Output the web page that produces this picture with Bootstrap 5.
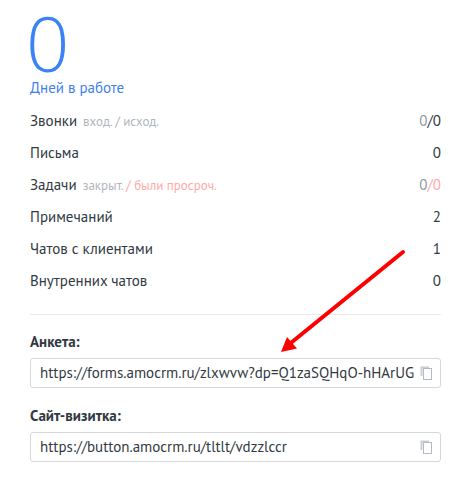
<!DOCTYPE html>
<html lang="ru">
<head>
<meta charset="utf-8">
<meta name="viewport" content="width=device-width, initial-scale=1">
<title>Статистика</title>
<link href="https://cdn.jsdelivr.net/npm/bootstrap@5.3.0/dist/css/bootstrap.min.css" rel="stylesheet">
<style>
body { font-family: "PT Sans", "Noto Sans", sans-serif; font-size: 15px; line-height: 20px; color: #313942; background: #fff; }
.panel { padding: 11px 29px 24px 30px; }
.days-value { font-family: "Open Sans", sans-serif; font-weight: 300; font-size: 76px; line-height: 64px; color: #3a82f5; margin-left: -4px; }
.days-label { color: #3f80ee; line-height: 26px; }
.stat-list { padding-top: 4px; }
.stat-row { height: 32px; }
.stat-note { font-size: 13px; color: #b0b5bd; margin-left: 2px; }
.muted-num { color: #8f99a6; }
.late { color: #ffa9a9; }
.divider { border-top: 1px solid #e8eaeb; margin: 17px 0 16px; }
.link-field { margin-bottom: 17px; }
.link-label { font-weight: 700; line-height: 22px; margin-bottom: 5px; }
.link-box { height: 30px; border: 1px solid #d7d8da; border-radius: 3px; padding: 0 7px 0 9px; }
.link-box input { font-size: 15px; line-height: 20px; color: #313942; min-width: 0; }
.copy-btn { line-height: 0; margin-left: 6px; }
.pointer { right: 35px; top: -67px; pointer-events: none; }
</style>
<script src="https://cdn.jsdelivr.net/npm/bootstrap@5.3.0/dist/js/bootstrap.bundle.min.js" defer></script>
</head>
<body>
<main class="panel">
  <div class="days-value">0</div>
  <div class="days-label">Дней в работе</div>
  <dl class="stat-list mb-0">
    <div class="stat-row d-flex align-items-center justify-content-between">
      <dt class="fw-normal">Звонки <span class="stat-note">вход. / исход.</span></dt>
      <dd class="mb-0"><span class="muted-num">0</span>/0</dd>
    </div>
    <div class="stat-row d-flex align-items-center justify-content-between">
      <dt class="fw-normal">Письма</dt><dd class="mb-0">0</dd>
    </div>
    <div class="stat-row d-flex align-items-center justify-content-between">
      <dt class="fw-normal">Задачи <span class="stat-note">закрыт. <span class="late">/ были просроч.</span></span></dt>
      <dd class="mb-0"><span class="muted-num">0</span><span class="late">/0</span></dd>
    </div>
    <div class="stat-row d-flex align-items-center justify-content-between">
      <dt class="fw-normal">Примечаний</dt><dd class="mb-0">2</dd>
    </div>
    <div class="stat-row d-flex align-items-center justify-content-between">
      <dt class="fw-normal">Чатов с клиентами</dt><dd class="mb-0">1</dd>
    </div>
    <div class="stat-row d-flex align-items-center justify-content-between">
      <dt class="fw-normal">Внутренних чатов</dt><dd class="mb-0">0</dd>
    </div>
  </dl>
  <div class="divider position-relative">
    <svg class="pointer position-absolute" width="126" height="106" viewBox="0 0 126 106" aria-hidden="true">
      <path d="M12 94 L123 4" fill="none" stroke="#f00" stroke-width="4" stroke-linecap="round"/>
      <path d="M1 104 L7 89 L17 100.500 Z" fill="#f00"/>
    </svg>
  </div>
  <div class="link-field">
    <label class="link-label d-block" for="form-link">Анкета:</label>
    <div class="link-box d-flex align-items-center">
      <input class="flex-grow-1 border-0 p-0 bg-transparent" id="form-link" type="text" readonly value="https://forms.amocrm.ru/zlxwvw?dp=Q1zaSQHqO-hHArUG">
      <button class="copy-btn btn p-0 border-0" type="button" aria-label="Скопировать">
        <svg width="13" height="14" viewBox="0 0 13 14" fill="none"><path d="M1.500 10V1.500H9" stroke="#c9cdd6" stroke-width="2"/><rect x="3.500" y="2.500" width="8" height="11" fill="#fff" stroke="#b3b9c6"/></svg>
      </button>
    </div>
  </div>
  <div class="link-field">
    <label class="link-label d-block" for="site-link">Сайт-визитка:</label>
    <div class="link-box d-flex align-items-center">
      <input class="flex-grow-1 border-0 p-0 bg-transparent" id="site-link" type="text" readonly value="https://button.amocrm.ru/tltlt/vdzzlccr">
      <button class="copy-btn btn p-0 border-0" type="button" aria-label="Скопировать">
        <svg width="13" height="14" viewBox="0 0 13 14" fill="none"><path d="M1.500 10V1.500H9" stroke="#c9cdd6" stroke-width="2"/><rect x="3.500" y="2.500" width="8" height="11" fill="#fff" stroke="#b3b9c6"/></svg>
      </button>
    </div>
  </div>
</main>
</body>
</html>
